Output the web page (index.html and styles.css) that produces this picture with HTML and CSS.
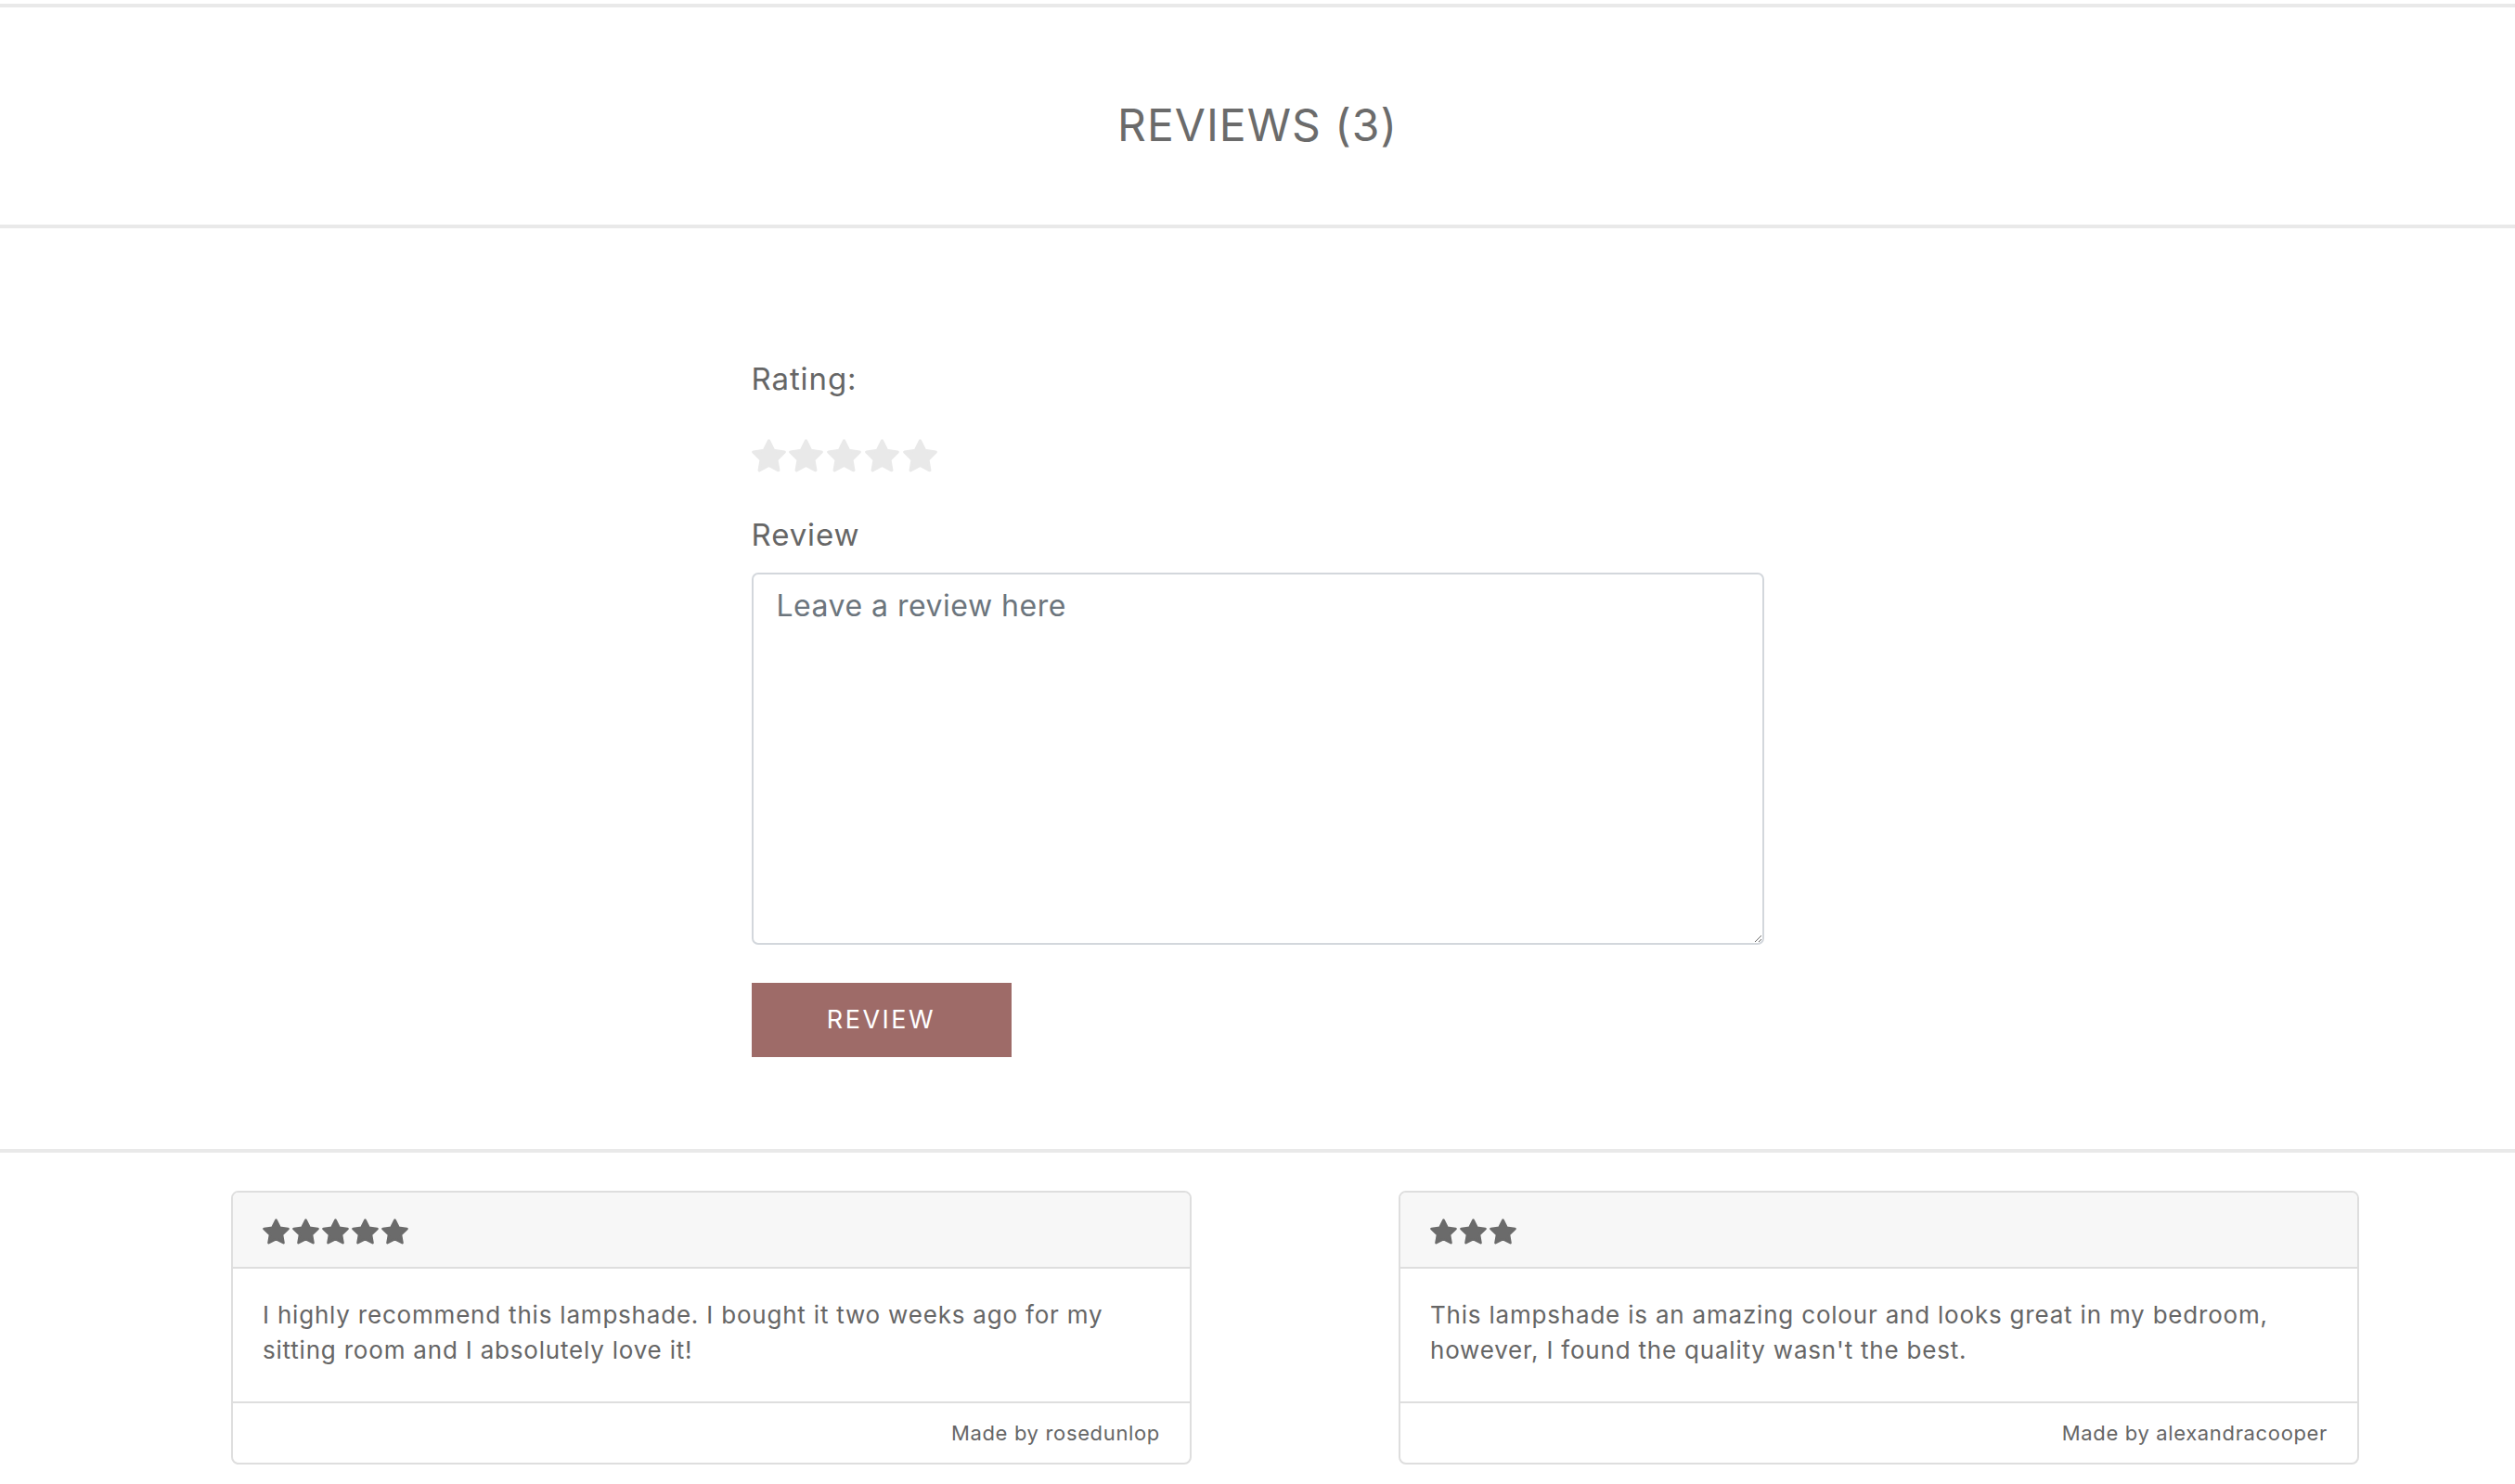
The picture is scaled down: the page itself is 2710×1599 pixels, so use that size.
FILE: index.html
```html
<!DOCTYPE html>
<html lang="en">
<head>
<meta charset="utf-8">
<title>Reviews</title>
<link rel="stylesheet" href="styles.css">
</head>
<body>
<svg class="defs" width="0" height="0" aria-hidden="true">
  <defs>
    <symbol id="star" viewBox="1 1 22 21.6">
      <polygon points="12,2.2 15.09,8.46 22,9.47 17,14.34 18.18,21.22 12,17.97 5.82,21.22 7,14.34 2,9.47 8.91,8.46" stroke="currentColor" stroke-width="2" stroke-linejoin="round" fill="currentColor"/>
    </symbol>
  </defs>
</svg>

<header class="reviews-head">
  <h2 class="reviews-title">REVIEWS (3)</h2>
</header>

<section class="review-form-section">
  <form class="review-form">
    <label class="form-label">Rating:</label>
    <div class="rating-input">
      <svg class="star-lg"><use href="#star"/></svg>
      <svg class="star-lg"><use href="#star"/></svg>
      <svg class="star-lg"><use href="#star"/></svg>
      <svg class="star-lg"><use href="#star"/></svg>
      <svg class="star-lg"><use href="#star"/></svg>
    </div>
    <label class="form-label review-label" for="review">Review</label>
    <textarea id="review" class="review-text" placeholder="Leave a review here"></textarea>
    <button type="button" class="review-btn">REVIEW</button>
  </form>
</section>

<section class="review-list">
  <article class="review-card">
    <div class="card-head">
      <svg class="star-sm"><use href="#star"/></svg>
      <svg class="star-sm"><use href="#star"/></svg>
      <svg class="star-sm"><use href="#star"/></svg>
      <svg class="star-sm"><use href="#star"/></svg>
      <svg class="star-sm"><use href="#star"/></svg>
    </div>
    <div class="card-body">
      <p>I highly recommend this lampshade. I bought it two weeks ago for my sitting room and I absolutely love it!</p>
    </div>
    <div class="card-foot">Made by rosedunlop</div>
  </article>
  <article class="review-card">
    <div class="card-head">
      <svg class="star-sm"><use href="#star"/></svg>
      <svg class="star-sm"><use href="#star"/></svg>
      <svg class="star-sm"><use href="#star"/></svg>
    </div>
    <div class="card-body">
      <p>This lampshade is an amazing colour and looks great in my bedroom, however, I found the quality wasn't the best.</p>
    </div>
    <div class="card-foot">Made by alexandracooper</div>
  </article>
</section>
</body>
</html>
```

FILE: styles.css
```css
html, body {
  margin: 0;
  padding: 0;
  background: #ffffff;
}

body {
  font-family: Inter, "Open Sans", "Liberation Sans", sans-serif;
  color: #666666;
}

.defs {
  position: absolute;
  width: 0;
  height: 0;
  overflow: hidden;
}

.reviews-head {
  margin-top: 4px;
  border-top: 4px solid #e9e9e9;
  border-bottom: 4px solid #e9e9e9;
  padding: 98px 0 78px;
  text-align: center;
}

.reviews-title {
  margin: 0;
  font-size: 48px;
  line-height: 1.2;
  font-weight: 400;
  color: #6b6b6b;
  letter-spacing: 1px;
}

.review-form-section {
  border-bottom: 4px solid #e9e9e9;
  padding: 143px 0 99px;
}

.review-form {
  width: 1091px;
  margin: 0 auto;
  display: flex;
  flex-direction: column;
  align-items: flex-start;
}

.form-label {
  font-size: 33px;
  line-height: 1.2;
  color: #666666;
  letter-spacing: 0.9px;
}

.rating-input {
  display: flex;
  gap: 3.8px;
  margin-top: 45px;
  color: #e9e9e9;
}

.star-lg {
  width: 37px;
  height: 36px;
}

.review-label {
  margin-top: 48px;
}

.review-text {
  box-sizing: border-box;
  width: 100%;
  height: 401px;
  margin-top: 20px;
  padding: 15px 25px;
  border: 2px solid #d3d7dc;
  border-radius: 7px;
  font-family: inherit;
  font-size: 32px;
  line-height: 1.2;
  letter-spacing: 0.5px;
  color: #495057;
  resize: vertical;
  outline: none;
}

.review-text::placeholder {
  color: #6c757d;
  opacity: 1;
}

.review-btn {
  margin-top: 41px;
  width: 280px;
  height: 80px;
  border: 0;
  border-radius: 0;
  background: #9e6b68;
  color: #ffffff;
  font-family: inherit;
  font-size: 27px;
  font-weight: 400;
  letter-spacing: 2.5px;
  cursor: pointer;
}

.review-list {
  display: flex;
  gap: 223px;
  padding: 41px 0 22px 249px;
}

.review-card {
  width: 1035px;
  box-sizing: border-box;
  border: 2px solid #dedede;
  border-radius: 8px;
  overflow: hidden;
}

.card-head {
  display: flex;
  gap: 3px;
  padding: 28px 32px 24px;
  background: #f7f7f7;
  border-bottom: 2px solid #dedede;
  color: #6b6b6b;
}

.star-sm {
  width: 29px;
  height: 28px;
}

.card-body {
  padding: 31px 32px 36px;
  border-bottom: 2px solid #dedede;
}

.card-body p {
  margin: 0;
  font-size: 26px;
  line-height: 38px;
  letter-spacing: 0.8px;
  color: #666666;
}

.card-foot {
  height: 64px;
  padding: 0 32px;
  display: flex;
  align-items: center;
  justify-content: flex-end;
  font-size: 22px;
  letter-spacing: 0.65px;
  color: #666666;
}
```
